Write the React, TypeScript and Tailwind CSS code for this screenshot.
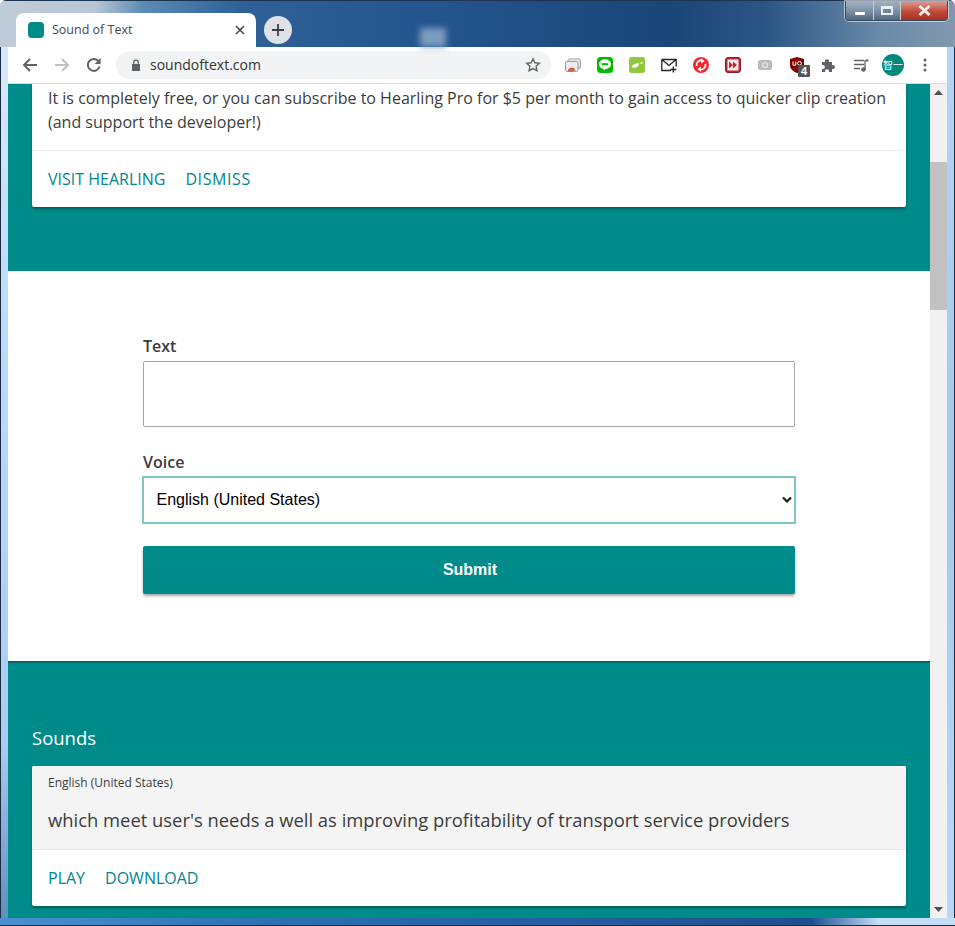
import React from "react";

const ExtIcon = ({ children, x = 16 }: { children: React.ReactNode; x?: number }) => (
  <svg width={x} height={16} viewBox={`0 0 ${x} 16`} className="block shrink-0">{children}</svg>
);

function Toolbar() {
  return (
    <div className="flex h-[36px] items-center bg-white">
      <div className="flex w-[108px] shrink-0 items-center">
        <svg width="16" height="16" viewBox="0 0 16 16" className="ml-[14px]" fill="none" stroke="#5f6368" strokeWidth="2"><path d="M15 8H2M8 2 2 8l6 6" /></svg>
        <svg width="16" height="16" viewBox="0 0 16 16" className="ml-[16px]" fill="none" stroke="#bdc1c6" strokeWidth="2"><path d="M1 8h13M8 2l6 6-6 6" /></svg>
        <svg width="16" height="16" viewBox="0 0 16 16" className="ml-[16px]" fill="none" stroke="#5f6368" strokeWidth="2"><path d="M13.6 9.5A6 6 0 1 1 12.4 4" /><path d="M14.6 1v6h-6z" fill="#5f6368" stroke="none" /></svg>
      </div>
      <div className="flex h-[28px] w-[435px] shrink-0 items-center rounded-[14px] bg-[#f1f3f4] pl-[14px]">
        <svg width="12" height="12" viewBox="0 0 12 12" className="shrink-0"><path d="M2 5h8v7H2z" fill="#5f6368" /><path d="M3.8 5V3.4a2.2 2.2 0 0 1 4.4 0V5" fill="none" stroke="#5f6368" strokeWidth="1.3" /></svg>
        <span className="ml-[8px] font-['Open_Sans',sans-serif] text-[14px] leading-none text-[#333]">soundoftext.com</span>
        <svg width="16" height="16" viewBox="0 0 16 16" className="ml-auto mr-[10px]" fill="none" stroke="#5f6368" strokeWidth="1.4"><path d="m8 1.8 1.9 4 4.4.5-3.2 3 .8 4.4L8 11.6l-3.9 2.1.8-4.4-3.2-3 4.4-.5z" /></svg>
      </div>
      <div className="ml-[14px] flex items-center gap-[16px]">
        <ExtIcon><rect x="3" y="2" width="12.500" height="9.500" rx="1.500" fill="#e4e4e4" stroke="#a0a0a0" /><rect x=".5" y="4.500" width="12.500" height="10" rx="1.500" fill="#ececec" stroke="#a0a0a0" /><path d="M3 14.500a3.700 3.700 0 0 1 7.400 0z" fill="#e34f3d" /><path d="M5.200 14.500a1.500 1.500 0 0 1 3 0z" fill="#4a90d9" /><path d="M8.300 14.500a1.700 1.700 0 0 1 2.100-1.500l.1 1.500z" fill="#f4c20d" /></ExtIcon>
        <ExtIcon><rect width="16" height="16" rx="3.500" fill="#00b900" /><ellipse cx="8" cy="7.200" rx="6" ry="4.900" fill="#fff" /><path d="M6.500 11h3l-2.600 2.600z" fill="#fff" /><path d="M4.800 6.200h6.400v2H4.800z" fill="#00b900" /></ExtIcon>
        <ExtIcon><rect width="16" height="16" rx="2.500" fill="#93c83e" /><path d="M2.500 10c1-3 4.500-4 7.500-3.800l-.5 2.300C7.500 10.800 4.500 11.300 2.500 10z" fill="#fff" /><path d="m10.800 6 3.200-1-1.400 2z" fill="#fff" /></ExtIcon>
        <ExtIcon><path d="M.8 2.500h14.400v7M.8 2.500V13.500H10M.8 2.500 8 8.500l7.200-6" fill="none" stroke="#222" strokeWidth="1.300" /><path d="M12.300 9.500v6M9.300 12.500h6" stroke="#222" strokeWidth="1.300" /></ExtIcon>
        <ExtIcon><circle cx="8" cy="8" r="8" fill="#f0262d" /><path d="M3.600 9A4.500 4.500 0 0 1 9.500 3.700M12.400 7A4.500 4.500 0 0 1 6.500 12.300" fill="none" stroke="#fff" strokeWidth="1.800" /><path d="m8 1.200 3.600 2.700L8.300 6.500zM8 14.800l-3.600-2.700 3.300-2.600z" fill="#fff" /></ExtIcon>
        <ExtIcon><rect x=".5" y=".5" width="15" height="15" rx="2.500" fill="#b9282e" stroke="#8f1d22" /><rect x="2.500" y="2.500" width="11" height="11" fill="#fbe9e9" /><path d="M4 4.500 8 8l-4 3.500zM8 4.500 12 8l-4 3.500z" fill="#b9282e" /></ExtIcon>
        <ExtIcon><rect x="1" y="3" width="14" height="10" rx="2" fill="#bcbcbc" /><circle cx="8" cy="8" r="2.500" fill="none" stroke="#e6e6e6" strokeWidth="1.200" /></ExtIcon>
        <div className="relative h-[16px] w-[16px] shrink-0">
          <svg width="16" height="16" viewBox="0 0 16 16" className="block"><path d="M8 0 15 2v6c0 4-3 6.500-7 8-4-1.500-7-4-7-8V2z" fill="#800000" /><path d="M4 4.500v3.700h2.800V4.500" fill="none" stroke="#fff" strokeWidth="1" /><circle cx="10.500" cy="6.300" r="1.900" fill="none" stroke="#fff" strokeWidth="1" /></svg>
          <span className="absolute left-[9px] top-[8px] flex h-[12px] w-[12px] items-center justify-center rounded-[1px] bg-[#555] font-['Liberation_Sans',sans-serif] text-[11px] font-bold leading-none text-white">4</span>
        </div>
        <ExtIcon><path d="M1 5h3.200a2 2 0 1 1 3.600 0H11v3.200a2 2 0 1 1 0 3.600V15H7.800a2 2 0 1 0-3.600 0H1v-3.200a2 2 0 1 0 0-3.600z" fill="#5f6368" /></ExtIcon>
        <ExtIcon><path d="M1 3.500h10M1 7.500h10M1 11.500h6" stroke="#5f6368" strokeWidth="1.300" /><path d="M12 3v9" stroke="#5f6368" strokeWidth="1.300" /><path d="M12.500 2.500h3v2h-3z" fill="#5f6368" /><circle cx="10.500" cy="12.500" r="2.300" fill="#5f6368" /></ExtIcon>
      </div>
      <div className="ml-[13px] flex h-[22px] w-[22px] shrink-0 items-center justify-center rounded-full bg-[#00897b] font-['Noto_Sans_CJK_JP',sans-serif] text-[10px] leading-none text-white">智一</div>
      <svg width="4" height="14" viewBox="0 0 4 14" className="ml-[19px] shrink-0" fill="#5f6368"><circle cx="2" cy="2" r="1.500" /><circle cx="2" cy="7" r="1.500" /><circle cx="2" cy="12" r="1.500" /></svg>
    </div>
  );
}

function TitleBar() {
  return (
    <div className="relative h-[47px] shrink-0 border-t border-[#1d3450] bg-[linear-gradient(90deg,#c0ccd8_0%,#b5c6d6_10%,#5d8ab4_15%,#2f6198_25%,#24558e_45%,#1a4677_70%,#2a5584_80%,#6a8aa8_92%,#8098ae_100%)]">
      <div className="absolute left-[420px] top-[27px] h-[19px] w-[26px] bg-[#7d9cc0] blur-[3px]" />
      <div className="relative flex h-full items-end pl-[16px]">
        <div className="flex h-[34px] w-[240px] items-center rounded-t-[8px] bg-white pl-[12px]">
          <div className="h-[16px] w-[16px] rounded-[4px] bg-[#008b8b]" />
          <span className="ml-[8px] font-['Open_Sans',sans-serif] text-[12.500px] leading-none text-[#45494e]">Sound of Text</span>
          <svg width="10" height="10" viewBox="0 0 10 10" className="ml-auto mr-[11px]" stroke="#45494e" strokeWidth="1.600"><path d="m1 1 8 8M9 1 1 9" /></svg>
        </div>
        <div className="mb-[3px] ml-[8px] flex h-[28px] w-[28px] items-center justify-center rounded-full bg-[#dee1e6]">
          <svg width="12" height="12" viewBox="0 0 12 12" stroke="#3c4043" strokeWidth="1.800"><path d="M6 0v12M0 6h12" /></svg>
        </div>
      </div>
      <div className="absolute right-[7px] top-0 flex h-[20px] w-[103px] overflow-hidden rounded-b-[4px] border border-t-0 border-[#3a4a5a] shadow-[0_0_0_1px_rgba(255,255,255,0.55)]">
        <div className="flex w-[28px] items-center justify-center border-r border-[#c6d0da] bg-[linear-gradient(180deg,#a3b3c2,#7f94a8_50%,#4f6880)]">
          <div className="mt-[5px] h-[3px] w-[10px] bg-white" />
        </div>
        <div className="flex w-[27px] items-center justify-center border-r border-[#c6d0da] bg-[linear-gradient(180deg,#a3b3c2,#7f94a8_50%,#4f6880)]">
          <div className="h-[9px] w-[12px] border-2 border-[#e8edf2] border-t-[3px] bg-[#6f8598]" />
        </div>
        <div className="flex flex-1 items-center justify-center bg-[linear-gradient(180deg,#d9a096,#c24a3a_55%,#a8301f)]">
          <svg width="13" height="11" viewBox="0 0 13 11" stroke="#f2f2f2" strokeWidth="2.800"><path d="m1.500 1 10 9M11.500 1l-10 9" /></svg>
        </div>
      </div>
    </div>
  );
}

function Card({ children, shade }: { children: React.ReactNode; shade?: boolean }) {
  return <div className={`overflow-hidden rounded-b-[2px] bg-white shadow-[0_2px_3px_rgba(0,0,0,0.35)] ${shade ? "rounded-t-[2px]" : ""}`}>{children}</div>;
}

const Action = ({ children, wide }: { children: React.ReactNode; wide?: boolean }) => (
  <a className={`text-[16px] leading-[24px] text-[#00868f] ${wide ? "tracking-[0.6px]" : ""}`}>{children}</a>
);

function Page() {
  return (
    <div className="min-w-0 flex-1 overflow-hidden bg-white font-['Open_Sans',sans-serif] text-[#3c3c3c]">
      <section className="bg-[#008b8b] px-[24px] pb-[64px]">
        <Card>
          <p className="px-[16px] pb-[16px] pt-[2px] text-[16px] leading-[24px]">
            It is completely free, or you can subscribe to Hearling Pro for $5 per month to gain access to quicker clip creation (and support the developer!)
          </p>
          <div className="flex h-[57px] items-center gap-[20px] border-t border-[#eee] px-[16px]">
            <Action>VISIT HEARLING</Action>
            <Action wide>DISMISS</Action>
          </div>
        </Card>
      </section>

      <section className="px-[135px] pb-[67px] pt-[63px]">
        <label className="block text-[16px] font-semibold leading-[24px] text-[#3c3c3c]">Text</label>
        <textarea className="mt-[3px] block h-[66px] w-full resize-none rounded-[2px] border border-[#a5a5a5] bg-white" />
        <label className="mt-[23px] block text-[16px] font-semibold leading-[24px] text-[#3c3c3c]">Voice</label>
        <div className="relative mt-[3px] flex h-[46px] items-center justify-between bg-white pl-[13.500px] pr-[3px] font-['Liberation_Sans',sans-serif] text-[16px] text-black outline-2 -outline-offset-1 outline-[#7fc5c5]">
          <span>English (United States)</span>
          <svg width="10" height="8" viewBox="0 0 10 8" fill="none" stroke="#1a1a1a" strokeWidth="2.200"><path d="m1 1.500 4 4 4-4" /></svg>
        </div>
        <button className="mt-[23px] block h-[48px] w-full rounded-[2px] bg-[#008b8b] pl-[2px] font-['Liberation_Sans',sans-serif] text-[16px] font-bold text-white shadow-[0_2px_3px_rgba(0,0,0,0.35)]">Submit</button>
      </section>

      <section className="border-t-2 border-[#006a6a] bg-[#008b8b] px-[24px] pb-[12px] pt-[61px]">
        <h2 className="text-[18.500px] font-normal leading-[28px] text-white">Sounds</h2>
        <div className="mt-[14px]">
          <Card shade>
            <div className="h-[84px] border-b border-[#e8e8e8] bg-[#f4f4f4] px-[16px] pt-[8px]">
              <div className="text-[12px] leading-[18px]">English (United States)</div>
              <div className="mt-[14px] text-[18.400px] leading-[27px]">which meet user's needs a well as improving profitability of transport service providers</div>
            </div>
            <div className="flex h-[56px] items-center gap-[20px] px-[16px]">
              <Action>PLAY</Action>
              <Action>DOWNLOAD</Action>
            </div>
          </Card>
        </div>
      </section>
    </div>
  );
}

function Scrollbar() {
  return (
    <div className="flex w-[17px] shrink-0 flex-col items-center bg-[#f1f1f1]">
      <svg width="9" height="5" viewBox="0 0 9 5" className="mt-[6px] shrink-0" fill="#505050"><path d="M4.500 0 9 5H0z" /></svg>
      <div className="mt-[67px] h-[148px] w-full shrink-0 bg-[#c1c1c1]" />
      <svg width="9" height="5" viewBox="0 0 9 5" className="mb-[6px] mt-auto shrink-0" fill="#505050"><path d="M0 0h9L4.500 5z" /></svg>
    </div>
  );
}

export default function App() {
  return (
    <div className="flex h-[926px] w-[955px] flex-col overflow-hidden rounded-t-[6px] bg-[#bcdcfa]">
      <TitleBar />
      <div className="flex min-h-0 flex-1">
        <div className="w-[8px] shrink-0 border-l border-[#1d2b3e] bg-[linear-gradient(180deg,#d9e8f8,#bcdcfa_30%,#a9cdf0_80%,#5f8fc0)]" />
        <div className="flex min-w-0 flex-1 flex-col">
          <Toolbar />
          <div className="h-[1px] shrink-0 bg-[#dadce0]" />
          <div className="flex min-h-0 flex-1">
            <Page />
            <Scrollbar />
          </div>
        </div>
        <div className="w-[8px] shrink-0 border-r border-[#1d2b3e] bg-[linear-gradient(180deg,#b4d4f4,#a5c8ec_50%,#b8d8f8)]" />
      </div>
      <div className="h-[8px] shrink-0 border-b border-[#1d2b3e] bg-[linear-gradient(90deg,#4a90cf_0%,#2c6fb0_30%,#1f4f8f_85%,#c4defa_92%)]" />
    </div>
  );
}
